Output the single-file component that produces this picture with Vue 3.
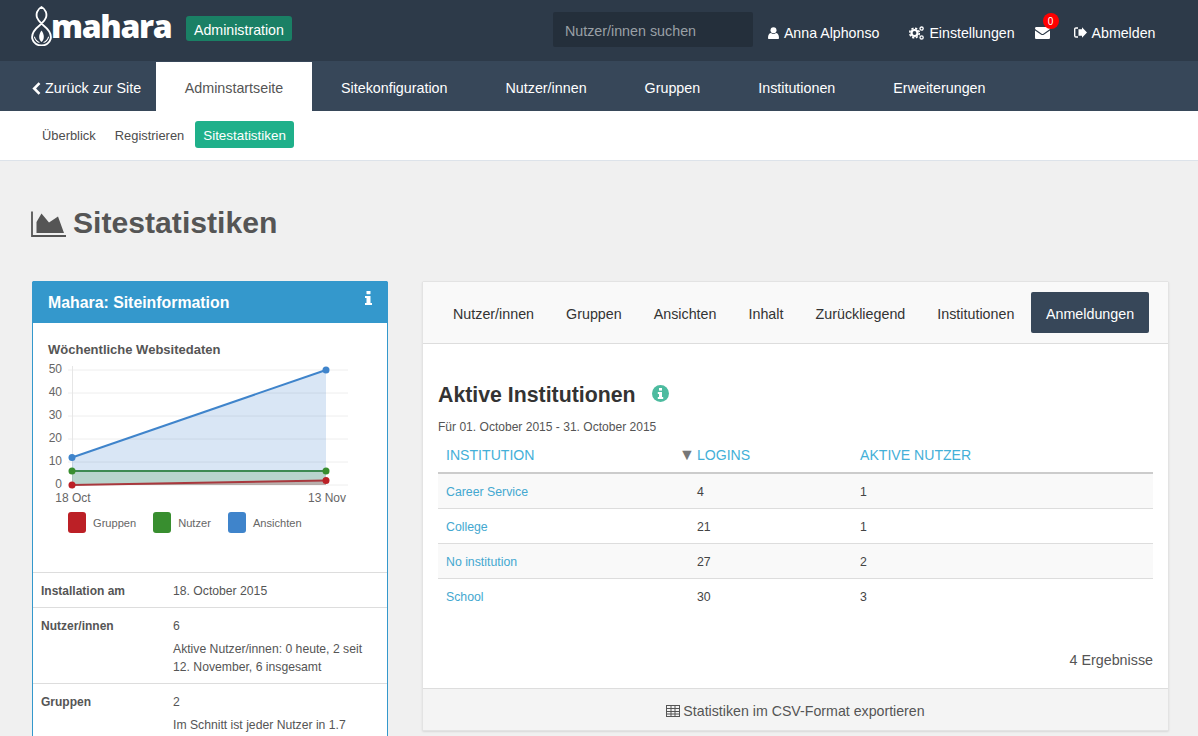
<script setup>
const topNav = ['Sitekonfiguration', 'Nutzer/innen', 'Gruppen', 'Institutionen', 'Erweiterungen']
const tabs = ['Nutzer/innen', 'Gruppen', 'Ansichten', 'Inhalt', 'Zurückliegend', 'Institutionen']
const rows = [
  ['Career Service', 4, 1],
  ['College', 21, 1],
  ['No institution', 27, 2],
  ['School', 30, 3]
]
const ticks = [50, 40, 30, 20, 10, 0]
const tickY = v => 485 - v * 2.3
const legend = [
  { label: 'Gruppen', color: '#bc2026' },
  { label: 'Nutzer', color: '#388e2f' },
  { label: 'Ansichten', color: '#3f84cb' }
]
</script>

<template>
  <div class="page">
    <header class="topbar">
      <div class="logo">
        <svg class="logo-mark" width="21" height="40" viewBox="0 0 20 39" fill="none" stroke="#fff">
          <path d="M10 1C6 3 4 8 6 12 7 15 10 17 12 19 17 23 20 27 19 32 18 36 14 38.500 10 38.500 6 38.500 2 36 1 32 0 27 3 23 8 19 10 17 13 15 14 12 16 8 14 3 10 1Z" stroke-width="1.800"/>
          <path d="M10 24C7 28 7 33 10 35 13 33 13 28 10 24Z" fill="#fff" stroke="none"/>
          <path d="M3 30c1 3 3 5 5 5.500M17 30c-1 3-3 5-5 5.500" stroke-width="1"/>
        </svg>
        <span class="logo-text">mahara</span>
      </div>
      <span class="admin-badge">Administration</span>
      <div class="search">Nutzer/innen suchen</div>
      <nav class="user-nav">
        <a class="user-link user-name">
          <svg width="11" height="12" viewBox="0 0 11 12" fill="#fff"><circle cx="5.500" cy="3.200" r="3"/><path d="M0 11c0-3.500 1.500-5 3-5 .8.600 1.600.9 2.500.9S7.200 6.600 8 6c1.500 0 3 1.500 3 5 0 .6-.5 1-1 1H1c-.5 0-1-.4-1-1z"/></svg>
          Anna Alphonso
        </a>
        <a class="user-link user-settings">
          <svg width="15" height="14" viewBox="0 0 15 14" fill="none" stroke="#fff">
            <circle cx="5.500" cy="7" r="3" stroke-width="2.200"/>
            <circle cx="5.500" cy="7" r="4.800" stroke-width="1.600" stroke-dasharray="2.200 1.570"/>
            <circle cx="12.600" cy="2.600" r="1.600" stroke-width="1.300"/>
            <circle cx="12.600" cy="11.400" r="1.600" stroke-width="1.300"/>
          </svg>
          Einstellungen
        </a>
        <a class="mail">
          <svg width="15" height="12" viewBox="0 0 15 12" fill="#fff"><path d="M1.300 0h12.400c.7 0 1.300.6 1.300 1.300 0 .5-.3 1-.7 1.300L8.300 6.700c-.5.3-1.100.3-1.600 0L.7 2.600C.3 2.300 0 1.800 0 1.300 0 .6.600 0 1.300 0z"/><path d="M0 3.500 6.200 7.700c.8.5 1.800.5 2.600 0L15 3.500v7.200c0 .7-.6 1.300-1.300 1.300H1.300C.6 12 0 11.400 0 10.700z"/></svg>
          <span class="mail-count">0</span>
        </a>
        <a class="user-link user-logout">
          <svg width="13" height="11" viewBox="0 0 13 11" fill="#fff"><path d="M8 2.200V.3L13 5.500 8 10.700V8.800H4.500V2.200z"/><path d="M4 1H2C1.200 1 .7 1.500.7 2.300v6.400C.7 9.500 1.200 10 2 10h2" fill="none" stroke="#fff" stroke-width="1.400"/></svg>
          Abmelden
        </a>
      </nav>
    </header>

    <nav class="mainnav">
      <a class="back">
        <svg width="9" height="13" viewBox="0 0 9 13" fill="none" stroke="#fff" stroke-width="2.600"><path d="M7.500 1.200 2.200 6.500l5.300 5.300"/></svg>
        Zurück zur Site
      </a>
      <a class="main-active">Adminstartseite</a>
      <a v-for="item in topNav" :key="item" class="main-item">{{ item }}</a>
    </nav>

    <nav class="subnav">
      <a class="sub-item">Überblick</a>
      <a class="sub-item">Registrieren</a>
      <a class="sub-active">Sitestatistiken</a>
    </nav>

    <main class="content">
      <h1 class="title">
        <svg width="35" height="27" viewBox="0 0 35 27">
          <path d="M1 1.500V26h34" fill="none" stroke="#555" stroke-width="1.800"/>
          <path d="M5.500 23V12L10.500 3.500 18 12.500 27 6.500 33 23Z" fill="#555"/>
        </svg>
        Sitestatistiken
      </h1>

      <div class="columns">
        <aside class="info-panel">
          <div class="info-head">
            <span>Mahara: Siteinformation</span>
            <svg width="7" height="14" viewBox="0 0 7 14" fill="#fff"><rect x="1.500" width="4" height="3.200" rx=".4"/><path d="M0 5h5.500v7H7v2H0v-2h1.500V7H0z"/></svg>
          </div>
          <div class="chart-box">
            <div class="chart-title">Wöchentliche Websitedaten</div>
            <svg class="chart" width="320" height="145" viewBox="40 360 320 145">
              <g stroke="#eee" stroke-width="1">
                <line v-for="t in ticks" :key="t" x1="68" x2="348" :y1="tickY(t)" :y2="tickY(t)"/>
                <line x1="72.500" x2="72.500" y1="366" y2="489" stroke="#e6e6e6"/>
              </g>
              <g class="tick-text">
                <text v-for="t in ticks" :key="t" x="62" :y="tickY(t) + 3" text-anchor="end">{{ t }}</text>
                <text x="73" y="502" text-anchor="middle">18 Oct</text>
                <text x="327" y="502" text-anchor="middle">13 Nov</text>
              </g>
              <path d="M72 458 326 370V485H72z" fill="#3f84cb" fill-opacity=".2"/>
              <path d="M72 471 326 471V485H72z" fill="#388e2f" fill-opacity=".2"/>
              <path d="M72 485 326 480.500V485z" fill="#bc2026" fill-opacity=".2"/>
              <path d="M72 485 326 480.500" stroke="#a8383d" stroke-width="2" fill="none"/>
              <path d="M72 471H326" stroke="#3d8a52" stroke-width="2" fill="none"/>
              <path d="M72 457.500 326 370" stroke="#3f84cb" stroke-width="2" fill="none"/>
              <circle cx="72" cy="485" r="3.500" fill="#bc2026"/><circle cx="326" cy="480.500" r="3.500" fill="#bc2026"/>
              <circle cx="72" cy="471" r="3.500" fill="#388e2f"/><circle cx="326" cy="471" r="3.500" fill="#388e2f"/>
              <circle cx="72" cy="457.500" r="3.500" fill="#3f84cb"/><circle cx="326" cy="370" r="3.500" fill="#3f84cb"/>
            </svg>
            <div class="legend">
              <div v-for="l in legend" :key="l.label" class="legend-item">
                <span class="swatch" :style="{ background: l.color }"></span>
                <span>{{ l.label }}</span>
              </div>
            </div>
          </div>
          <div class="info-row">
            <div class="info-key">Installation am</div>
            <div class="info-val">18. October 2015</div>
          </div>
          <div class="info-row">
            <div class="info-key">Nutzer/innen</div>
            <div class="info-val">
              <div>6</div>
              <div class="info-note">Aktive Nutzer/innen: 0 heute, 2 seit 12. November, 6 insgesamt</div>
            </div>
          </div>
          <div class="info-row">
            <div class="info-key">Gruppen</div>
            <div class="info-val">
              <div>2</div>
              <div class="info-note">Im Schnitt ist jeder Nutzer in 1.7</div>
            </div>
          </div>
        </aside>

        <section class="stats-panel">
          <div class="tabs">
            <a v-for="t in tabs" :key="t" class="tab">{{ t }}</a>
            <a class="tab tab-active">Anmeldungen</a>
          </div>
          <div class="stats-body">
            <h2 class="stats-title">
              Aktive Institutionen
              <svg width="17" height="17" viewBox="0 0 17 17"><circle cx="8.500" cy="8.500" r="8.500" fill="#4dbb9f"/><rect x="7" y="3" width="3" height="2.600" fill="#fff"/><path d="M5.800 7h4.200v5h1.200v2H5.800v-2H7V9H5.800z" fill="#fff"/></svg>
            </h2>
            <p class="period">Für 01. October 2015 - 31. October 2015</p>
            <table class="stats-table">
              <thead>
                <tr>
                  <th class="col-a">INSTITUTION</th>
                  <th class="col-b"><span class="sort">▼</span> LOGINS</th>
                  <th>AKTIVE NUTZER</th>
                </tr>
              </thead>
              <tbody>
                <tr v-for="r in rows" :key="r[0]">
                  <td class="link-cell">{{ r[0] }}</td>
                  <td class="num-cell">{{ r[1] }}</td>
                  <td>{{ r[2] }}</td>
                </tr>
              </tbody>
            </table>
            <div class="result-count">4 Ergebnisse</div>
          </div>
          <div class="stats-foot">
            <svg width="14" height="12" viewBox="0 0 14 12" fill="none" stroke="#555"><rect x=".5" y=".5" width="13" height="11"/><path d="M.5 3.500h13M.5 6.500h13M.5 9h13M5 .5v11M9 .5v11"/></svg>
            Statistiken im CSV-Format exportieren
          </div>
        </section>
      </div>
    </main>
  </div>
</template>

<style>
html, body { margin: 0; background: #f0f0f0; overflow: hidden; }
</style>

<style scoped>
.page {
  height: 736px;
  overflow: hidden;
  background: #f0f0f0;
  font-family: "Liberation Sans", Arial, sans-serif;
  font-size: 12px;
  color: #555;
}
.topbar {
  height: 61px;
  box-sizing: border-box;
  background: #2d3a49;
  display: flex;
  align-items: flex-start;
  color: #fff;
}
.logo { display: flex; align-items: flex-start; margin: 6px 0 0 31px; width: 155px; }
.logo-mark { flex: none; }
.logo-text {
  font-family: "Open Sans", sans-serif;
  font-weight: 800;
  font-size: 32px;
  line-height: 40px;
  letter-spacing: -1.300px;
  margin-left: -1px;
  color: #fff;
}
.admin-badge {
  margin-top: 16px;
  height: 25px;
  line-height: 28px;
  padding: 0 8px;
  background: #1a8065;
  border-radius: 3px;
  font-size: 14.200px;
  color: #fff;
}
.search {
  margin: 12px 0 0 261px;
  width: 200px;
  height: 35px;
  box-sizing: border-box;
  padding-left: 12px;
  line-height: 38px;
  background: #242f3b;
  border-radius: 2px;
  font-size: 14.300px;
  color: #9aa0a6;
}
.user-nav { display: flex; align-items: center; margin-top: 16px; height: 33px; }
.user-link { display: flex; align-items: center; gap: 5px; font-size: 14.200px; color: #fff; }
.user-name { margin-left: 15px; }
.user-settings { margin-left: 30px; }
.mail { position: relative; margin-left: 20px; height: 12px; display: block; line-height: 0; margin-top: 1px; }
.mail-count {
  position: absolute;
  left: 8px;
  top: -14px;
  width: 16px;
  height: 16px;
  border-radius: 50%;
  background: #f00;
  font-size: 10px;
  line-height: 17px;
  text-align: center;
  color: #fff;
}
.user-logout { margin-left: 24px; }

.mainnav {
  height: 50px;
  background: #374759;
  display: flex;
  align-items: stretch;
  font-size: 14.300px;
  line-height: 20px;
  color: #fff;
}
.back { display: flex; align-items: center; gap: 4px; margin-left: 32px; width: 124px; padding-top: 4px; box-sizing: border-box; }
.main-active {
  width: 156px;
  margin-top: 1px;
  padding-top: 3px;
  box-sizing: border-box;
  background: #fff;
  color: #555;
  display: flex;
  align-items: center;
  justify-content: center;
}
.main-item { display: flex; align-items: center; padding: 4px 29px 0; }

.subnav {
  height: 50px;
  box-sizing: border-box;
  background: #fff;
  border-bottom: 1px solid #dde3ea;
  padding: 10px 0 0 32.500px;
  display: flex;
  align-items: flex-start;
  font-size: 12.900px;
}
.sub-item { padding: 0 9.500px; height: 27px; line-height: 29px; color: #4d4d4d; }
.sub-active {
  margin-left: 1px;
  padding: 0 8.500px;
  height: 27px;
  line-height: 29px;
  font-size: 13.400px;
  background: #1fb08a;
  color: #fff;
  border-radius: 3px;
}

.content { padding: 0 29px 0 32px; }
.title {
  margin: 0 0 0 -1px;
  padding: 45px 0 41px;
  height: 34px;
  display: flex;
  align-items: center;
  gap: 7px;
  font-size: 30.150px;
  line-height: 34px;
  font-weight: 700;
  color: #555;
}
.columns { display: flex; align-items: flex-start; gap: 34px; }

.info-panel {
  width: 356px;
  flex: none;
  box-sizing: border-box;
  background: #fff;
  border: 1px solid #3498cc;
  border-radius: 2px;
  height: 600px;
}
.info-head {
  height: 42px;
  margin: -1px -1px 0;
  background: #3498cc;
  display: flex;
  justify-content: space-between;
  padding: 13px 16px 0;
  box-sizing: border-box;
  border-radius: 2px 2px 0 0;
  color: #fff;
  font-size: 15.850px;
  line-height: 18px;
  font-weight: 700;
}
.info-head svg { margin-top: -3px; }
.chart-box { height: 249px; box-sizing: border-box; padding-top: 19px; }
.chart-title { margin-left: 15px; font-size: 13px; font-weight: 700; line-height: 15px; color: #555; }
.chart { display: block; margin: 3px 0 0 7px; }
.tick-text text { font-size: 12px; fill: #666; }
.legend { display: flex; margin: 7px 0 0 35px; gap: 17px; font-size: 11.100px; color: #666; }
.legend-item { display: flex; align-items: center; gap: 7px; }
.swatch { width: 18px; height: 21px; border-radius: 3px; }
.info-row {
  display: flex;
  border-top: 1px solid #ddd;
  padding: 11px 8px 9px;
  font-size: 12.200px;
  line-height: 14px;
}
.info-key { width: 132px; flex: none; font-weight: 700; font-size: 12px; color: #555; }
.info-val { color: #555; width: 192px; }
.info-note { margin: 7px 0 -2px; line-height: 18px; }

.stats-panel {
  flex: 1;
  height: 450px;
  box-sizing: border-box;
  background: #fff;
  border: 1px solid #e3e3e3;
  border-radius: 2px;
  box-shadow: 0 1px 2px rgba(0,0,0,.1);
  display: flex;
  flex-direction: column;
}
.tabs {
  height: 62px;
  flex: none;
  box-sizing: border-box;
  background: #f9f9f9;
  border-bottom: 1px solid #ddd;
  display: flex;
  align-items: flex-start;
  padding: 10px 0 0 14px;
  font-size: 14.300px;
  color: #333;
}
.tab { height: 41px; line-height: 44px; padding: 0 16px; }
.tab-active { padding: 0 15px; margin-left: .5px; background: #374759; color: #fff; border-radius: 2px; }
.stats-body { flex: 1; padding: 0 15px; position: relative; }
.stats-title {
  margin: 39px 0 0;
  display: flex;
  align-items: center;
  gap: 16px;
  font-size: 21.300px;
  line-height: 24px;
  font-weight: 700;
  color: #333;
}
.stats-title svg { margin-top: -3px; }
.period { margin: 13px 0 0; font-size: 12.050px; line-height: 14px; color: #555; }
.stats-table { width: 100%; table-layout: fixed; border-collapse: collapse; margin-top: 4px; }
.stats-table th {
  height: 35px;
  box-sizing: border-box;
  padding: 9px 8px 0;
  vertical-align: top;
  line-height: 16px;
  text-align: left;
  font-size: 14.100px;
  font-weight: 400;
  color: #44b0d8;
  border-bottom: 2px solid #ccc;
}
.col-a { width: 235px; }
.col-b { width: 179px; }
.sort { display: inline-block; width: 14px; margin-left: -2px; color: #777; font-size: 16px; line-height: 14px; }
.stats-table td {
  height: 33px;
  padding: 1px 8px 0;
  font-size: 12.300px;
  color: #444;
  border-bottom: 1px solid #ddd;
}
.stats-table tbody tr:nth-child(odd) { background: #f9f9f9; }
.stats-table tbody tr:last-child td { border-bottom: 0; background: #fff; }
.stats-table td.link-cell { color: #44a8d0; }
.stats-table td.num-cell { padding-left: 24px; }
.result-count {
  position: absolute;
  right: 15px;
  top: 308px;
  font-size: 14.300px;
  color: #555;
}
.stats-foot {
  height: 42px;
  flex: none;
  box-sizing: border-box;
  padding-top: 3px;
  background: #f4f4f4;
  border-top: 1px solid #ddd;
  display: flex;
  align-items: center;
  justify-content: center;
  gap: 3px;
  font-size: 14.200px;
  color: #555;
}
</style>
